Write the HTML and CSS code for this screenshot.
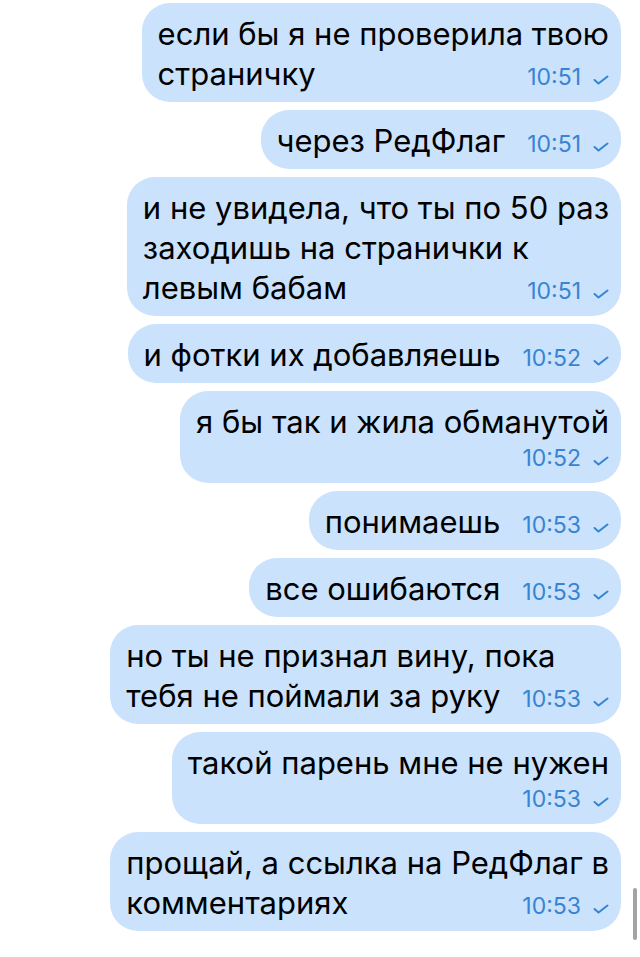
FILE: index.html
```html
<!DOCTYPE html>
<html lang="ru">
<head>
    <meta charset="UTF-8">
    <title>Чат</title>
    <link rel="stylesheet" href="styles.css">
</head>
<body>
<div class="chat">
    <div class="msg">если бы я не проверила твою<br>страничку<span class="meta">10:51<svg class="check" viewBox="0 0 16 10"><path d="M1.5 5 L5.5 8.5 L14.5 1.5"/></svg></span></div>
    <div class="msg">через РедФлаг<span class="meta">10:51<svg class="check" viewBox="0 0 16 10"><path d="M1.5 5 L5.5 8.5 L14.5 1.5"/></svg></span></div>
    <div class="msg">и не увидела, что ты по 50 раз<br>заходишь на странички к<br>левым бабам<span class="meta">10:51<svg class="check" viewBox="0 0 16 10"><path d="M1.5 5 L5.5 8.5 L14.5 1.5"/></svg></span></div>
    <div class="msg">и фотки их добавляешь<span class="meta">10:52<svg class="check" viewBox="0 0 16 10"><path d="M1.5 5 L5.5 8.5 L14.5 1.5"/></svg></span></div>
    <div class="msg tall">я бы так и жила обманутой<span class="meta">10:52<svg class="check" viewBox="0 0 16 10"><path d="M1.5 5 L5.5 8.5 L14.5 1.5"/></svg></span></div>
    <div class="msg">понимаешь<span class="meta">10:53<svg class="check" viewBox="0 0 16 10"><path d="M1.5 5 L5.5 8.5 L14.5 1.5"/></svg></span></div>
    <div class="msg">все ошибаются<span class="meta">10:53<svg class="check" viewBox="0 0 16 10"><path d="M1.5 5 L5.5 8.5 L14.5 1.5"/></svg></span></div>
    <div class="msg">но ты не признал вину, пока<br>тебя не поймали за руку<span class="meta">10:53<svg class="check" viewBox="0 0 16 10"><path d="M1.5 5 L5.5 8.5 L14.5 1.5"/></svg></span></div>
    <div class="msg tall">такой парень мне не нужен<span class="meta">10:53<svg class="check" viewBox="0 0 16 10"><path d="M1.5 5 L5.5 8.5 L14.5 1.5"/></svg></span></div>
    <div class="msg">прощай, а ссылка на РедФлаг в<br>комментариях<span class="meta">10:53<svg class="check" viewBox="0 0 16 10"><path d="M1.5 5 L5.5 8.5 L14.5 1.5"/></svg></span></div>
</div>
<div class="scrollbar"></div>
</body>
</html>
```

FILE: styles.css
```css
* {
    margin: 0;
    padding: 0;
}

body {
    background-color: #fff;
    font-family: "Inter", "Roboto", "Liberation Sans", sans-serif;
    color: #000;
    width: 640px;
    height: 957px;
    overflow: hidden;
    position: relative;
}

.chat {
    display: flex;
    flex-direction: column;
    align-items: flex-end;
    gap: 8px;
    padding: 3px 19px 0 0;
}

.msg {
    background-color: #cae2fc;
    border-radius: 28px;
    padding: 11px 12px 8px 16px;
    font-size: 31px;
    line-height: 40px;
}

/* время и галочка справа внизу */
.meta {
    float: right;
    margin: 6px 0 0 22px;
    font-size: 23px;
    line-height: 34px;
    color: #3784d3;
    white-space: nowrap;
}

.msg.tall .meta {
    float: none;
    display: block;
    margin: 0;
    text-align: right;
    line-height: 33px;
}

.check {
    width: 16px;
    height: 10px;
    margin-left: 12px;
    fill: none;
    stroke: #3784d3;
    stroke-width: 2;
    stroke-linecap: round;
    stroke-linejoin: round;
}

.scrollbar {
    position: absolute;
    left: 633px;
    top: 888px;
    width: 4px;
    height: 52px;
    border-radius: 2px;
    background-color: #a3a3a3;
}
```
